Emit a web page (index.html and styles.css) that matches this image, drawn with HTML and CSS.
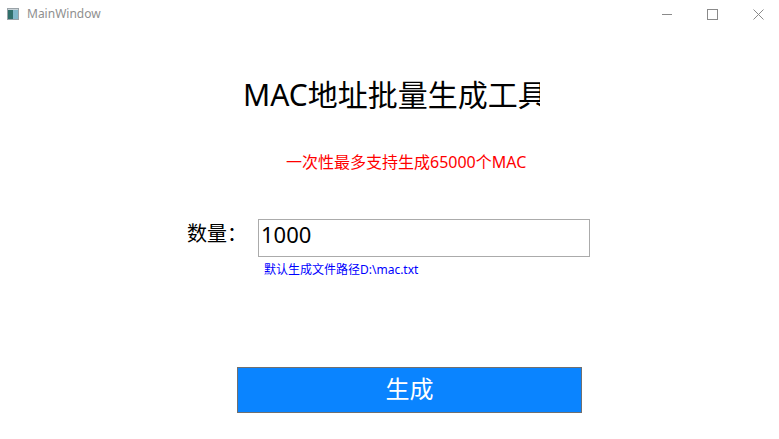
FILE: index.html
```html
<!DOCTYPE html>
<html lang="zh-CN">
<head>
<meta charset="utf-8">
<title>MainWindow</title>
<link rel="stylesheet" href="styles.css">
</head>
<body>
<div class="window">
  <div class="titlebar">
    <svg class="app-icon" width="12" height="12" viewBox="0 0 12 12">
      <rect x="0.5" y="0.5" width="11" height="11" fill="#e8eef0" stroke="#9aa3a8"/>
      <rect x="1" y="2" width="5" height="9" fill="#2f6f6a"/>
      <rect x="6" y="2" width="5" height="9" fill="#7fb7c9"/>
      <rect x="1" y="1" width="10" height="1" fill="#c9d3d8"/>
    </svg>
    <span class="win-title">MainWindow</span>
    <div class="controls">
      <svg class="ctl ctl-min" width="10" height="10" viewBox="0 0 10 10"><path d="M0 5.5H10" stroke="#8a8a8a" stroke-width="1"/></svg>
      <svg class="ctl ctl-max" width="11" height="11" viewBox="0 0 11 11"><rect x="0.5" y="0.5" width="10" height="10" fill="none" stroke="#8a8a8a" stroke-width="1"/></svg>
      <svg class="ctl ctl-close" width="11" height="11" viewBox="0 0 11 11"><path d="M0.5 0.5L10.5 10.5M10.5 0.5L0.5 10.5" stroke="#8a8a8a" stroke-width="1"/></svg>
    </div>
  </div>
  <main class="content">
    <div class="title-wrap"><h1 class="title">MAC地址批量生成工具</h1></div>
    <p class="notice">一次性最多支持生成65000个MAC</p>
    <div class="row">
      <label class="label" for="count">数量：</label>
      <input id="count" class="count" type="text" value="1000">
    </div>
    <p class="hint">默认生成文件路径D:\mac.txt</p>
    <button class="btn" type="button">生成</button>
  </main>
</div>
</body>
</html>
```
FILE: styles.css
```css
html, body {
  margin: 0;
  padding: 0;
  background: #ffffff;
}
body {
  font-family: "Noto Sans", "Noto Sans CJK SC", sans-serif;
  width: 779px;
  height: 439px;
  overflow: hidden;
}
.window {
  display: flex;
  flex-direction: column;
  width: 779px;
  height: 439px;
}
.titlebar {
  display: flex;
  align-items: center;
  height: 28px;
  padding-left: 7px;
}
.app-icon {
  flex: none;
}
.win-title {
  margin-left: 8px;
  font-size: 12px;
  color: #8f8f8f;
  line-height: 16px;
}
.controls {
  margin-left: auto;
  display: flex;
  align-items: center;
}
.ctl { display: block; }
.ctl-min { margin-right: 35px; }
.ctl-max { margin-right: 35px; }
.ctl-close { margin-right: 15px; }

.content {
  display: flex;
  flex-direction: column;
  align-items: flex-start;
}
.title-wrap {
  margin-top: 48px;
  margin-left: 243px;
  width: 297px;
  overflow: hidden;
  white-space: nowrap;
}
.title {
  margin: 0;
  font-weight: normal;
  font-size: 30px;
  line-height: 38px;
  color: #000;
}
.notice {
  margin: 38px 0 0 286px;
  font-size: 16px;
  line-height: 20px;
  color: #ff0000;
}
.row {
  display: flex;
  align-items: flex-start;
  margin-top: 47px;
  margin-left: 187px;
}
.label {
  font-size: 20px;
  line-height: 30px;
  width: 71px;
  color: #000;
}
.count {
  box-sizing: border-box;
  width: 332px;
  height: 38px;
  margin: 0;
  border: 1px solid #ababab;
  padding: 0 0 8px 2px;
  font-family: "Noto Sans", "Noto Sans CJK SC", sans-serif;
  font-size: 22px;
  color: #000;
  outline: none;
  background: #fff;
}
.hint {
  margin: 5px 0 0 264px;
  font-size: 12px;
  line-height: 16px;
  color: #0000ff;
}
.btn {
  box-sizing: border-box;
  margin: 89px 0 0 237px;
  width: 345px;
  height: 46px;
  border: 1px solid #707070;
  background: #0a84ff;
  color: #ffffff;
  font-family: "Noto Sans", "Noto Sans CJK SC", sans-serif;
  font-size: 24px;
  line-height: 30px;
  padding: 0 0 2px 0;
}
```
